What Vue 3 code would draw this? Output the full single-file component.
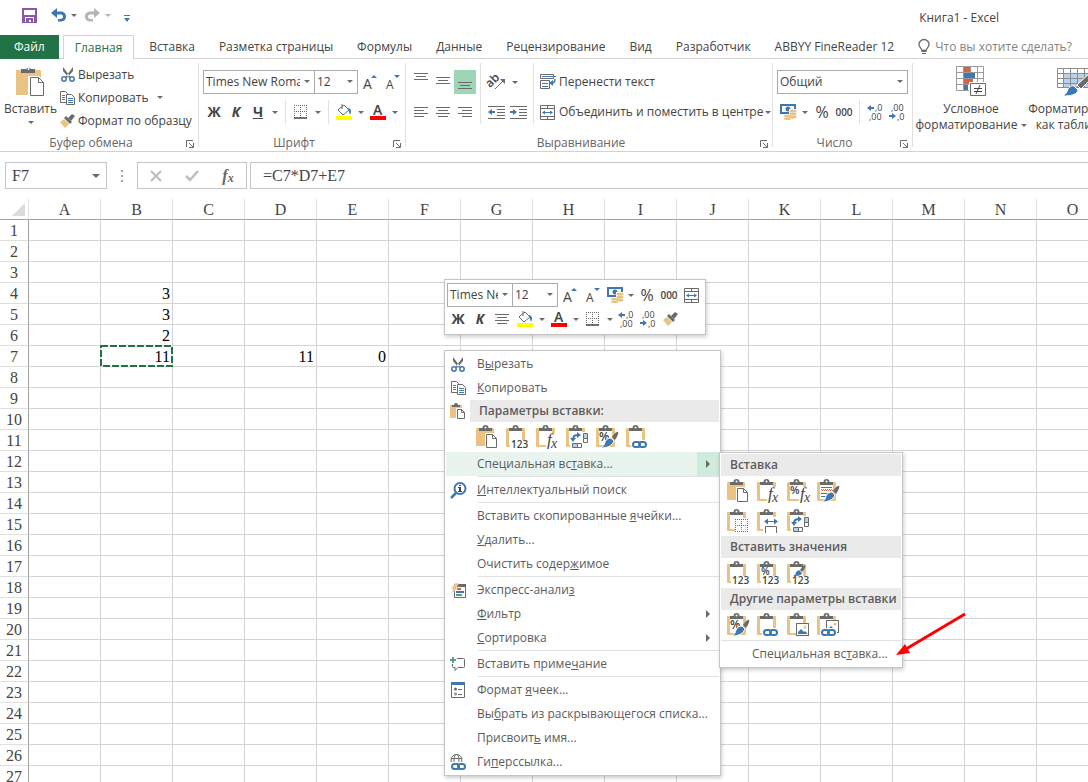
<script setup>
import { h, ref } from 'vue'

const gray = '#6a6a6a'
const blue = '#3f77b3'
const tan = '#eac282'

// list of [x, y, width] turned into one pixel lines
const lines = (list, color = gray) =>
  list.map(([x, y, w]) => `<rect x="${x}" y="${y}" width="${w}" height="1" fill="${color}"/>`).join('')

const label = (x, y, size, text, extra = '') =>
  `<text x="${x}" y="${y}" font-size="${size}" fill="#444" font-family="Open Sans, sans-serif" ${extra}>${text}</text>`

const clip = `<path d="M3 6V3h3.500a3 3 0 0 1 6 0H16v3z" fill="${gray}"/><circle cx="9.500" cy="2.500" r="1" fill="#fff"/>`
const solidBoard = `<rect y="3" width="18" height="18" rx="1" fill="${tan}"/>${clip}`
const openBoard = `<rect y="3" width="19" height="19" rx="1" fill="${tan}"/><path d="M3 6h13v14H3z" fill="#fff"/>${clip}`
const page = `<path d="M9 8h8l5 5v11H9z" fill="#fff"/><path d="M10.500 9.500h6l4 4v9h-10z" fill="#fff" stroke="${gray}"/><path d="M16.500 9.500v4h4" fill="none" stroke="${gray}"/>`
const fx = (x) => `<rect x="${x}" y="8" width="${22 - x}" height="16" fill="#fff"/><text x="${x + 1}" y="20" font-size="17" font-style="italic" font-family="Liberation Serif, serif" fill="#444">f</text><text x="${x + 5}" y="23" font-size="14" font-style="italic" font-family="Liberation Serif, serif" fill="#444">x</text>`
const digits = `<rect x="4" y="15" width="18" height="9" fill="#fff"/>${label(5, 23, 10, '123', 'font-weight="600"')}`
const brush = `<path d="M22 7c-1-1-4 2-6 5l3 3c2-3 4-7 3-8z" fill="${gray}"/><path d="M15 13l3 3c-2 5-7 7-13 7 3-2 3-3 4-6 1-3 4-4 6-4z" fill="${blue}" stroke="#fff"/>`
const chain = (x, y) => `<rect x="${x - 1}" y="${y - 1}" width="17" height="9" fill="#fff"/><g fill="none" stroke="${blue}" stroke-width="2"><rect x="${x + 1}" y="${y + 1}" width="7" height="5" rx="2.500"/><rect x="${x + 7}" y="${y + 1}" width="7" height="5" rx="2.500"/></g>`
const transposeMark = `<rect x="4" y="7" width="18" height="17" fill="#fff"/><path d="M7 14c0-3 2-4 5-4" fill="none" stroke="${blue}" stroke-width="2"/><path d="M11 7l4 3-4 3zM4 13h6l-3 4z" fill="${blue}"/><path d="M17.500 8.500h4v5h-4zM6.500 18.500h5v4h-5z" fill="#b7cfe8" stroke="${gray}"/><path d="M17.500 13.500h4v4h-4zM11.500 18.500h4v4h-4z" fill="#fff" stroke="${gray}"/>`
const picture = (x, y) => `<rect x="${x}.500" y="${y}.500" width="12" height="12" fill="#fff" stroke="${gray}"/><path d="M${x + 2} ${y + 11}v-2l3-3 3 3 1-1 2 2v1z" fill="${blue}"/><circle cx="${x + 9}" cy="${y + 4}" r="1.500" fill="${tan}"/>`
const scissors = `<path d="M2 0l7.500 10-1.500 1L2 4zM12 0L4.500 10 6 11l6-7z" fill="${gray}"/><g fill="#fff" stroke="${blue}" stroke-width="1.500"><circle cx="3" cy="12" r="2.200"/><circle cx="11" cy="12" r="2.200"/></g>`
const copyPages = `<path d="M.5.5h5l2 2v9h-7z" fill="#fff" stroke="${gray}"/>${lines([[2, 4, 3], [2, 6, 3], [2, 8, 3]], blue)}<path d="M6.500 3.500h5l3 3v7h-8z" fill="#fff" stroke="${gray}"/>${lines([[8, 7, 5], [8, 9, 5], [8, 11, 5]], blue)}`
const arrowL = (x, y) => `<path d="M${x} ${y}l4-3v2h3v2h-3v2z" fill="${blue}"/>`
const arrowR = (x, y) => `<path d="M${x} ${y}l-4-3v2h-3v2h3v2z" fill="${blue}"/>`
const undoPath = 'M0 5l6-5v3.500h3c4 0 6 2 6 5s-2 5-6 5H7v-2.500h2c2.500 0 3-1 3-2.500S11 6.500 9 6.500H6v3.500z'

// name: [width, height, markup]
const icons = {
  save: [15, 15, `<path d="M0 0h15v15H0zM2 2v5h11V2zM3 9v4h1v-3h7v3h1V9z" fill="#8a58a8" fill-rule="evenodd"/><path d="M3 9h9v5H3z" fill="#fff"/><path d="M4 10h7v4H9v-2H7v2H4z" fill="#8a58a8"/>`],
  undo: [15, 14, `<path d="${undoPath}" fill="${blue}"/>`],
  redo: [15, 14, `<path transform="matrix(-1 0 0 1 15 0)" d="${undoPath}" fill="#b4b4b4"/>`],
  more: [6, 7, `<path d="M0 0h6v1H0zM0 3h6L3 7z" fill="${blue}"/>`],
  bulb: [12, 16, `<path d="M4 11.500c0-2-3-3-3-6a5 5 0 0 1 10 0c0 3-3 4-3 6z" fill="none" stroke="${gray}" stroke-width="1.300"/><path d="M3.500 12h5v1h-5zM4 14h4v1H4z" fill="${gray}"/>`],
  pasteBig: [29, 31, `<rect y="4" width="25" height="25" rx="1" fill="${tan}"/><path d="M5 7V3h5a3 3 0 0 1 5 0h4v4z" fill="${gray}"/><circle cx="12.500" cy="3" r="1" fill="#fff"/><path d="M12 10h11l6 6v15H12z" fill="#fff"/><path d="M14.500 11.500h8l5 5v13h-13z" fill="#fff" stroke="${gray}"/><path d="M22.500 11.500v5h5" fill="none" stroke="${gray}"/>`],
  cut: [14, 15, scissors],
  copy: [15, 14, copyPages],
  brush: [16, 14, `<path d="M12 0l3 2-4 5-3-3z" fill="${gray}"/><path d="M6 2l6 6-2 2-6-6z" fill="${gray}"/><path d="M4 5l5 5-4 4-5-6z" fill="${tan}"/>`],
  launcher: [8, 8, `<path d="M.5 7V.5H7" fill="none" stroke="${gray}"/><path d="M3 3l4 4M7.500 3v4.500H3" fill="none" stroke="${gray}"/>`],
  grow: [14, 16, `${label(0, 15, 14, 'A')}<path d="M8 4h6l-3-3z" fill="${blue}"/>`],
  shrink: [14, 16, `${label(0, 15, 12, 'A')}<path d="M8 1h6l-3 3z" fill="${blue}"/>`],
  borders: [14, 14, `<path d="M0 .5h13M0 6.500h13M.5 0v13M6.500 0v13M12.500 0v13" stroke="${gray}" stroke-dasharray="1 1"/><path d="M0 13h13" stroke="#444" stroke-width="1.500"/>`],
  fill: [16, 16, `<path d="M3 5l5-4 5 5-6 5-5-5z" fill="#fff" stroke="${gray}"/><path d="M6 0v5" stroke="${gray}"/><path d="M11 4c4 0 5 3 3 7-1-3-1-4-3-7z" fill="${blue}"/><rect y="12" width="16" height="4" fill="#ff0"/>`],
  color: [16, 16, `${label(3, 11, 14, 'A', 'font-weight="600"')}<rect y="12" width="16" height="4" fill="red"/>`],
  alignTop: [14, 18, lines([[0, 0, 14], [2, 3, 10], [0, 6, 14]])],
  alignMiddle: [14, 18, lines([[0, 4, 14], [2, 7, 10], [0, 10, 14]])],
  alignBottom: [14, 18, lines([[0, 9, 14], [2, 12, 10], [0, 15, 14]])],
  alignLeft: [14, 10, lines([[0, 0, 14], [0, 3, 10], [0, 6, 14], [0, 9, 10]])],
  alignCenter: [14, 10, lines([[0, 0, 14], [2, 3, 10], [0, 6, 14], [2, 9, 10]])],
  alignRight: [14, 10, lines([[0, 0, 14], [4, 3, 10], [0, 6, 14], [4, 9, 10]])],
  orient: [17, 16, `<g transform="rotate(-45 6 8)">${label(-2, 9, 12, 'ab', 'font-weight="600"')}</g><path d="M6 15l8-8" stroke="${gray}"/><path d="M11 5h5v5z" fill="${gray}"/>`],
  outdent: [17, 13, lines([[0, 0, 17], [9, 3, 8], [9, 6, 8], [9, 9, 8], [0, 12, 17]]) + arrowL(0, 6)],
  indent: [17, 13, lines([[0, 0, 17], [9, 3, 8], [9, 6, 8], [9, 9, 8], [0, 12, 17]]) + arrowR(7, 6)],
  wrap: [16, 16, `<path d="M.5.500h13v4H.5zM.5 6.500h9v8h-9z" fill="#fff" stroke="${gray}"/>${lines([[2, 2, 14], [2, 9, 6], [2, 12, 6]], blue)}<path d="M15 5c0 3-1 4-3 4" fill="none" stroke="${blue}" stroke-width="1.500"/><path d="M9 9l4-3v6z" fill="${blue}"/>`],
  merge: [15, 15, `<path d="M.5.5h14v14H.5zM.5 3.500h14M.5 11.500h14M7.500 0v3M7.500 12v3" fill="none" stroke="${gray}"/><path d="M3 7.500h9" stroke="${blue}"/><path d="M2 7.500l3-2v4zM13 7.500l-3-2v4z" fill="${blue}"/>`],
  money: [17, 16, `<rect width="16" height="10" fill="${blue}"/><path d="M2 2h12v6H2z" fill="#fff"/><circle cx="8" cy="5" r="2.500" fill="${blue}"/><path d="M9 5h8v11H3v-6h6z" fill="#fff"/><g fill="${tan}"><ellipse cx="13" cy="7" rx="3.500" ry="1.500"/><ellipse cx="13" cy="10" rx="3.500" ry="1.500"/><ellipse cx="13" cy="13" rx="3.500" ry="1.500"/><ellipse cx="7.500" cy="12" rx="3.500" ry="1.300"/><ellipse cx="7.500" cy="14.700" rx="3.500" ry="1.300"/></g>`],
  moreDigits: [16, 16, `${arrowL(0, 4)}${label(8, 7, 9, ',0')}${label(2, 16, 9, ',00')}`],
  lessDigits: [16, 16, `${label(2, 7, 9, ',00')}${arrowR(7, 12)}${label(8, 16, 9, ',0')}`],
  conditional: [30, 31, `<path d="M.5.5h27v24H.5zM0 6.500h28M0 12.500h28M0 18.500h28M7.500 0v25M14.500 0v25M21.500 0v25" fill="none" stroke="#9a9a9a"/><path d="M8 1h6v5H8zM8 13h9v5H8z" fill="#dc6141"/><path d="M8 7h11v5H8zM8 19h4v5H8z" fill="${blue}"/><path d="M13 16h17v15H13z" fill="#fff"/><path d="M14.500 17.500h15v12h-15z" fill="#fff" stroke="${gray}"/><path d="M18 22.500h8M18 25.500h8M24 19l-4 9" stroke="#444"/>`],
  tableFormat: [36, 31, `<g transform="translate(0 2)"><path d="M7 6h28v14H7z" fill="#b9d0ea"/><path d="M.5.5h34v19H.5zM0 5.500h35M0 10.500h35M0 15.500h35M6.500 0v20M13.500 0v20M20.500 0v20M27.500 0v20" fill="none" stroke="#8d8d8d"/><path d="M34 4l-14 13 4 4L36 9z" fill="${gray}" stroke="#fff"/><path d="M17 18l4 4c-1 5-8 6-15 6 3-2 4-4 5-7 1-2 4-4 6-3z" fill="${blue}" stroke="#fff"/></g>`],
  paste: [22, 24, solidBoard + page],
  pasteSmall: [16, 16, `<path d="M0 2h12v13H0z" fill="${tan}"/><path d="M2 4V2h2a2 2 0 0 1 4 0h2v2z" fill="${gray}"/><path d="M6 5h10v11H6z" fill="#fff"/><path d="M7.500 6.500h4l3 3v6h-7z" fill="#fff" stroke="${gray}"/><path d="M11.500 6.500v3h3" fill="none" stroke="${gray}"/>`],
  pasteValues: [22, 24, openBoard + digits],
  pasteFormula: [22, 24, openBoard + fx(10)],
  pasteTranspose: [22, 24, openBoard + transposeMark],
  pasteFormat: [22, 24, openBoard + label(3, 16, 12, '%', 'font-weight="600"') + brush],
  pasteLink: [22, 24, openBoard + chain(6, 16)],
  pasteFormulaNumber: [22, 24, openBoard + fx(12) + label(3, 15, 11, '%', 'font-weight="600"')],
  pasteSource: [22, 24, openBoard + lines([[4, 8, 11], [4, 14, 9], [4, 17, 6]], blue) + `<path d="M4 10.500h11M5 11.500h11" stroke="#dc6141" stroke-dasharray="1 1"/>` + brush],
  pasteNoBorders: [22, 24, openBoard + `<path d="M8 9h14v15H8z" fill="#fff"/><path d="M8 10.500h13M8 16.500h13M8 22.500h13M8.500 10v13M14.500 10v13M20.500 10v13" stroke="${gray}" stroke-dasharray="1 1"/>`],
  pasteWidth: [22, 24, openBoard + `<path d="M6 8h16v16H6z" fill="#fff"/><path d="M8.500 24v-6.500h11V24" fill="none" stroke="${gray}"/><path d="M9 12.500h10" stroke="${blue}"/><path d="M7 12.500l4-3v6zM21 12.500l-4-3v6z" fill="${blue}"/>`],
  pasteValuesNumber: [22, 24, openBoard + digits + label(4, 14, 10, '%', 'font-weight="600"')],
  pasteValuesSource: [22, 24, openBoard + digits + `<path d="M18 4c-1 0-4 3-5 5l2 2c2-2 4-5 3-7z" fill="${gray}"/><path d="M12 9l3 3c-1 3-5 3-9 3 2-1 3-2 3-4z" fill="${blue}"/>`],
  pastePicture: [22, 24, openBoard + picture(9, 10)],
  pastePictureLink: [22, 24, openBoard + picture(9, 7) + chain(4, 16)],
  lookup: [17, 17, `<circle cx="10" cy="6.500" r="5.500" fill="#fff" stroke="${blue}" stroke-width="2"/><path d="M6 11l-5 5" stroke="${blue}" stroke-width="2.500"/><path d="M9 3h2v1H9zM8 5h3v4h1v1H8V9h1V6H8z" fill="#444"/>`],
  analysis: [15, 15, `<path d="M3.500 1.500h11v13h-11z" fill="#fff" stroke="${gray}"/><path d="M3 1h12v3H3z" fill="${gray}"/><path d="M6 5h4v2H6z" fill="#dc6141"/><path d="M5 8h8v2H5z" fill="${blue}"/><path d="M5 11h6v2H5z" fill="#55a07d"/><path d="M4 0h4L5 4h3L0 11l2-5H0z" fill="${tan}" stroke="#fff" stroke-width=".5"/>`],
  comment: [16, 15, `<path d="M7 1.500h6.500a1 1 0 0 1 1 1v7a1 1 0 0 1-1 1H8l-3 3v-3H3.500a1 1 0 0 1-1-1V7" fill="none" stroke="${gray}"/><path d="M2 0h2v2h2v2H4v2H2V4H0V2h2z" fill="#55a07d"/>`],
  cells: [14, 16, `<path d="M.5.5h13v15H.5z" fill="#fff" stroke="${gray}"/><path d="M0 0h14v3H0z" fill="${blue}"/><circle cx="4.500" cy="7" r="1.500" fill="${gray}"/><circle cx="4.500" cy="12" r="1" fill="#fff" stroke="${gray}"/>${lines([[7, 7, 4], [7, 12, 4]])}`],
  link: [16, 16, `<g fill="none" stroke="${gray}"><circle cx="6.500" cy="6" r="5.500"/><ellipse cx="6.500" cy="6" rx="2.500" ry="5.500"/><path d="M1 4.500h11M1 8.500h11"/></g>${chain(1, 9)}`],
  cancel: [12, 12, '<path d="M1 1l10 10M11 1L1 11" stroke="#bdbdbd" stroke-width="2"/>'],
  accept: [14, 11, '<path d="M1 6l4 4 8-9" fill="none" stroke="#bdbdbd" stroke-width="2.500"/>'],
}

const Icon = ({ name }) => {
  const [width, height, innerHTML] = icons[name]
  return h('svg', { width, height, viewBox: `0 0 ${width} ${height}`, overflow: 'visible', 'aria-hidden': true, innerHTML })
}
Icon.props = ['name']

const tabs = ['Вставка', 'Разметка страницы', 'Формулы', 'Данные', 'Рецензирование', 'Вид', 'Разработчик', 'ABBYY FineReader 12']
const columns = 'ABCDEFGHIJKLMNO'.split('')
const cells = { B4: 3, B5: 3, B6: 2, B7: 11, D7: 11, E7: 0 }
const formula = ref('=C7*D7+E7')

const pasteOptions = ['paste', 'pasteValues', 'pasteFormula', 'pasteTranspose', 'pasteFormat', 'pasteLink']

// & stands before the underlined access key
const menu = [
  [{ text: 'В&ырезать', icon: 'cut' }, { text: '&Копировать', icon: 'copy' }, { options: true }, { text: 'Специальная вс&тавка...', sub: true, active: true }],
  [{ text: '&Интеллектуальный поиск', icon: 'lookup' }],
  [{ text: 'Вставить скопированные &ячейки...' }, { text: '&Удалить...' }, { text: 'Очистить содер&жимое' }],
  [{ text: 'Экспресс-анали&з', icon: 'analysis' }, { text: '&Фильтр', sub: true }, { text: '&Сортировка', sub: true }],
  [{ text: 'Вставить приме&чание', icon: 'comment' }],
  [{ text: 'Формат &ячеек...', icon: 'cells' }, { text: 'Вы&брать из раскрывающегося списка...' }, { text: 'Присвоит&ь имя...' }, { text: 'Ги&перссылка...', icon: 'link' }],
]

const submenu = [
  { title: 'Вставка', icons: ['paste', 'pasteFormula', 'pasteFormulaNumber', 'pasteSource', 'pasteNoBorders', 'pasteWidth', 'pasteTranspose'] },
  { title: 'Вставить значения', icons: ['pasteValues', 'pasteValuesNumber', 'pasteValuesSource'] },
  { title: 'Другие параметры вставки', icons: ['pasteFormat', 'pasteLink', 'pastePicture', 'pastePictureLink'] },
]

const Mnemonic = ({ text }) => {
  const [before, after] = text.split('&')
  return h('span', [before, h('u', after[0]), after.slice(1)])
}
Mnemonic.props = ['text']
</script>

<template>
  <div class="app">
    <header class="title-bar">
      <button class="quick save"><Icon name="save" /></button>
      <button class="quick"><Icon name="undo" /><i class="caret"></i></button>
      <button class="quick faded"><Icon name="redo" /><i class="caret"></i></button>
      <button class="quick"><Icon name="more" /></button>
      <span class="title">Книга1 - Excel</span>
    </header>

    <nav class="tabs">
      <button class="tab file">Файл</button>
      <button class="tab current">Главная</button>
      <button v-for="tab in tabs" :key="tab" class="tab">{{ tab }}</button>
      <label class="ask">
        <Icon name="bulb" />
        <input type="text" placeholder="Что вы хотите сделать?" aria-label="Что вы хотите сделать?">
      </label>
    </nav>

    <section class="ribbon">
      <div class="group clipboard">
        <div class="body">
          <button class="big">
            <Icon name="pasteBig" />
            <span>Вставить</span>
            <i class="caret"></i>
          </button>
          <div class="stack">
            <button class="command"><span class="slot"><Icon name="cut" /></span>Вырезать</button>
            <button class="command"><span class="slot"><Icon name="copy" /></span>Копировать<i class="caret"></i></button>
            <button class="command"><span class="slot"><Icon name="brush" /></span>Формат по образцу</button>
          </div>
        </div>
        <div class="caption">Буфер обмена<Icon name="launcher" /></div>
      </div>

      <div class="group font">
        <div class="body rows">
          <div class="row">
            <label class="combo family"><select aria-label="Шрифт"><option>Times New Roman</option></select></label>
            <label class="combo size"><select aria-label="Размер шрифта"><option>12</option></select></label>
            <button class="tool wide"><Icon name="grow" /></button>
            <button class="tool"><Icon name="shrink" /></button>
          </div>
          <div class="row">
            <button class="tool bold">Ж</button>
            <button class="tool bold italic">К</button>
            <button class="tool bold"><u>Ч</u></button>
            <button class="drop"><i class="caret"></i></button>
            <i class="divider"></i>
            <button class="tool"><Icon name="borders" /></button>
            <button class="drop"><i class="caret"></i></button>
            <i class="divider"></i>
            <button class="tool"><Icon name="fill" /></button>
            <button class="drop"><i class="caret"></i></button>
            <button class="tool"><Icon name="color" /></button>
            <button class="drop"><i class="caret"></i></button>
          </div>
        </div>
        <div class="caption">Шрифт<Icon name="launcher" /></div>
      </div>

      <div class="group align">
        <div class="body">
          <div class="rows">
            <div class="row">
              <button class="tool"><Icon name="alignTop" /></button>
              <button class="tool"><Icon name="alignMiddle" /></button>
              <button class="tool pressed"><Icon name="alignBottom" /></button>
            </div>
            <div class="row">
              <button class="tool"><Icon name="alignLeft" /></button>
              <button class="tool"><Icon name="alignCenter" /></button>
              <button class="tool"><Icon name="alignRight" /></button>
            </div>
          </div>
          <i class="divider tall"></i>
          <div class="rows">
            <div class="row">
              <button class="tool wide"><Icon name="orient" /></button>
              <button class="drop"><i class="caret"></i></button>
            </div>
            <div class="row">
              <button class="tool"><Icon name="outdent" /></button>
              <button class="tool"><Icon name="indent" /></button>
            </div>
          </div>
          <i class="divider tall"></i>
          <div class="rows">
            <button class="command"><span class="slot"><Icon name="wrap" /></span>Перенести текст</button>
            <button class="command"><span class="slot"><Icon name="merge" /></span>Объединить и поместить в центре<i class="caret"></i></button>
          </div>
        </div>
        <div class="caption">Выравнивание<Icon name="launcher" /></div>
      </div>

      <div class="group number">
        <div class="body rows">
          <div class="row">
            <label class="combo format"><select aria-label="Числовой формат"><option>Общий</option></select></label>
          </div>
          <div class="row">
            <button class="tool"><Icon name="money" /></button>
            <button class="drop"><i class="caret"></i></button>
            <button class="tool percent">%</button>
            <button class="tool zeros">000</button>
            <i class="divider"></i>
            <button class="tool"><Icon name="moreDigits" /></button>
            <button class="tool"><Icon name="lessDigits" /></button>
          </div>
        </div>
        <div class="caption">Число<Icon name="launcher" /></div>
      </div>

      <div class="group styles">
        <div class="body">
          <button class="big">
            <Icon name="conditional" />
            <span>Условное<br>форматирование<i class="caret"></i></span>
          </button>
          <button class="big">
            <Icon name="tableFormat" />
            <span>Форматировать<br>как таблицу<i class="caret"></i></span>
          </button>
        </div>
      </div>
    </section>

    <section class="formula-bar">
      <label class="name-box"><input type="text" value="F7" aria-label="Имя"><i class="caret large"></i></label>
      <span class="dots"><i></i><i></i><i></i></span>
      <div class="formula-tools">
        <button><Icon name="cancel" /></button>
        <button><Icon name="accept" /></button>
        <button class="fx">f<small>x</small></button>
      </div>
      <input v-model="formula" class="formula" type="text" aria-label="Строка формул">
    </section>

    <main class="sheet">
      <table>
        <thead>
          <tr>
            <th class="corner"></th>
            <th v-for="col in columns" :key="col">{{ col }}</th>
          </tr>
        </thead>
        <tbody>
          <tr v-for="row in 27" :key="row">
            <th>{{ row }}</th>
            <td v-for="col in columns" :key="col">
              {{ cells[col + row] }}
              <svg v-if="col + row === 'B7'" class="ants" width="73" height="22"><rect x="1" y="1" width="71" height="20" /></svg>
            </td>
          </tr>
        </tbody>
      </table>
    </main>

    <div class="popup mini">
      <div class="row">
        <label class="combo family"><select aria-label="Шрифт"><option>Times New Roman</option></select></label>
        <label class="combo size"><select aria-label="Размер шрифта"><option>12</option></select></label>
        <button class="tool wide"><Icon name="grow" /></button>
        <button class="tool"><Icon name="shrink" /></button>
        <button class="tool"><Icon name="money" /></button>
        <button class="drop"><i class="caret"></i></button>
        <button class="tool percent">%</button>
        <button class="tool zeros">000</button>
        <button class="tool"><Icon name="merge" /></button>
      </div>
      <div class="row">
        <button class="tool bold">Ж</button>
        <button class="tool bold italic">К</button>
        <button class="tool"><Icon name="alignCenter" /></button>
        <button class="tool wide"><Icon name="fill" /></button>
        <button class="drop"><i class="caret"></i></button>
        <button class="tool wide"><Icon name="color" /></button>
        <button class="drop"><i class="caret"></i></button>
        <button class="tool wide"><Icon name="borders" /></button>
        <button class="drop"><i class="caret"></i></button>
        <button class="tool"><Icon name="moreDigits" /></button>
        <button class="tool"><Icon name="lessDigits" /></button>
        <button class="tool wide"><Icon name="brush" /></button>
      </div>
    </div>

    <div class="popup menu">
      <div v-for="(section, i) in menu" :key="i" class="section">
        <template v-for="item in section" :key="item.text">
          <template v-if="item.options">
            <div class="heading-row">
              <span class="menu-icon"><Icon name="pasteSmall" /></span>
              <h3 class="heading">Параметры вставки:</h3>
            </div>
            <div class="paste-row">
              <button v-for="name in pasteOptions" :key="name"><Icon :name="name" /></button>
            </div>
          </template>
          <button v-else class="menu-item" :class="{ active: item.active }">
            <span class="menu-icon"><Icon v-if="item.icon" :name="item.icon" /></span>
            <Mnemonic :text="item.text" />
            <span v-if="item.sub" class="sub-arrow"></span>
          </button>
        </template>
      </div>
    </div>

    <div class="popup submenu">
      <template v-for="part in submenu" :key="part.title">
        <h3 class="heading">{{ part.title }}</h3>
        <div class="paste-row">
          <button v-for="name in part.icons" :key="name"><Icon :name="name" /></button>
        </div>
      </template>
      <button class="menu-item last"><Mnemonic text="Специальная вс&тавка..." /></button>
    </div>

    <svg class="pointer" width="70" height="46" aria-hidden="true">
      <path d="M69 2L10 37" stroke="#f00" stroke-width="3" />
      <path d="M0 43l9-11 5 9z" fill="#f00" />
    </svg>
  </div>
</template>

<style>
body {
  margin: 0;
  overflow: hidden;
}
</style>

<style scoped>
* {
  box-sizing: border-box;
}
.app {
  position: relative;
  display: flex;
  flex-direction: column;
  height: 100vh;
  overflow: hidden;
  background: #fff;
  color: #444;
  font: 12px/16px "Open Sans", "Noto Sans", sans-serif;
}
button, input, select {
  margin: 0;
  padding: 0;
  border: none;
  background: transparent;
  color: inherit;
  font: inherit;
  outline: none;
}
button {
  display: flex;
  align-items: center;
  justify-content: center;
  white-space: nowrap;
}
svg {
  display: block;
  flex: none;
}
.caret {
  flex: none;
  display: inline-block;
  border: 3px solid transparent;
  border-top-color: #6a6a6a;
  border-bottom: none;
}
.caret.large {
  border-width: 4px;
  border-bottom: none;
}

.title-bar {
  display: flex;
  align-items: center;
  height: 35px;
  flex: none;
  padding: 0 89px 5px 22px;
}
.quick {
  gap: 5px;
  margin-right: 8px;
}
.quick.save {
  margin-right: 14px;
}
.quick:nth-child(4) {
  padding: 6px 0 0 5px;
}
.faded .caret {
  opacity: 0.5;
}
.title {
  margin-left: auto;
  padding-top: 5px;
}

.tabs {
  display: flex;
  flex: none;
  height: 24px;
  border-bottom: 1px solid #d2d2d2;
}
.tab {
  flex: none;
  padding: 0 12px;
}
.tab.file {
  padding: 0 14px;
  background: #217346;
  color: #fff;
  height: 24px;
}
.tab.current {
  height: 24px;
  margin: 0 3px 0 4px;
  padding: 0 11px;
  border: 1px solid #d2d2d2;
  border-bottom: none;
  background: #fff;
  color: #217346;
}
.ask {
  display: flex;
  align-items: center;
  flex: 1;
  gap: 5px;
  margin-left: 12px;
}
.ask input {
  flex: 1;
  min-width: 0;
}
.ask input::placeholder {
  color: #828282;
}

.ribbon {
  display: flex;
  flex: none;
  padding: 4px 0;
  border-bottom: 1px solid #d2d2d2;
  overflow: hidden;
}
.group {
  display: flex;
  flex-direction: column;
  flex: none;
  height: 84px;
  padding: 0 4px;
  border-right: 1px solid #e1e1e1;
}
.group.clipboard {
  width: 199px;
}
.group.font {
  width: 207px;
}
.group.align {
  width: 367px;
}
.group.number {
  width: 140px;
}
.group.styles {
  border: none;
}
.body {
  display: flex;
  flex: none;
  height: 68px;
}
.caption {
  display: flex;
  align-items: center;
  justify-content: center;
  flex: none;
  position: relative;
  height: 24px;
  padding-right: 16px;
  color: #666;
}
.caption svg {
  position: absolute;
  right: 0;
  top: 9px;
}
.rows {
  display: flex;
  flex-direction: column;
  gap: 6px;
  padding-top: 7px;
}
.row {
  display: flex;
  align-items: center;
  height: 24px;
}
.big {
  flex-direction: column;
  justify-content: flex-start;
  line-height: 16px;
  padding-top: 3px;
  gap: 4px;
}
.clipboard .big {
  width: 53px;
}
.stack {
  margin-left: 1px;
}
.command {
  height: 23px;
  justify-content: flex-start;
}
.rows .command {
  height: 24px;
}
.slot {
  display: flex;
  justify-content: center;
  width: 19px;
  margin-right: 1px;
}
.rows .slot {
  margin: 0 2px 0 0;
}
.command .caret {
  margin-left: 9px;
}
.rows .command .caret {
  margin-left: 2px;
}
.tool {
  flex: none;
  width: 22px;
  height: 24px;
}
.tool.wide {
  width: 24px;
}
.tool.pressed {
  background: #9fd5b7;
}
.bold {
  font-size: 14px;
  font-weight: 700;
}
.italic {
  font-style: italic;
}
.percent {
  font-size: 16px;
}
.zeros {
  font-size: 10px;
  font-weight: 600;
}
.drop {
  flex: none;
  width: 12px;
  height: 24px;
}
.divider {
  flex: none;
  width: 1px;
  height: 24px;
  margin: 0 4px;
  background: #e1e1e1;
}
.divider.tall {
  height: 61px;
}
.combo {
  position: relative;
  flex: none;
  height: 24px;
  border: 1px solid #ababab;
  background: #fff;
}
.combo::after {
  content: "";
  position: absolute;
  right: 4px;
  top: 9px;
  border: 3px solid transparent;
  border-top-color: #6a6a6a;
  border-bottom: none;
}
.combo select {
  appearance: none;
  width: 100%;
  height: 22px;
  padding: 0 14px 0 2px;
}
.family {
  width: 112px;
}
.size {
  width: 44px;
  margin-left: -1px;
}
.format {
  width: 131px;
}
.styles .big {
  width: 108px;
}
.styles .big + .big {
  width: 100px;
}
.styles .big .caret {
  margin: 0 0 2px 3px;
}

.formula-bar {
  display: flex;
  flex: none;
  height: 47px;
  padding: 10px 0 10px 5px;
  font: 16px/24px "Liberation Serif", serif;
}
.name-box {
  display: flex;
  align-items: center;
  width: 102px;
  border: 1px solid #c6c6c6;
  padding: 0 6px;
}
.name-box input {
  flex: 1;
  min-width: 0;
}
.dots {
  display: flex;
  flex-direction: column;
  align-items: center;
  justify-content: center;
  gap: 3px;
  width: 30px;
}
.dots i {
  width: 2px;
  height: 2px;
  background: #a0a0a0;
}
.formula-tools {
  display: flex;
  width: 110px;
  border: 1px solid #c6c6c6;
}
.formula-tools button {
  flex: 1;
}
.fx {
  font-style: italic;
  font-weight: 700;
  color: #666;
}
.fx small {
  font-size: 12px;
  padding-top: 4px;
}
.formula {
  flex: 1;
  margin-left: 3px;
  padding-left: 12px;
  border: 1px solid #c6c6c6;
  border-right: none;
}

.sheet {
  flex: 1;
  min-height: 0;
  overflow: hidden;
}
table {
  table-layout: fixed;
  width: 1109px;
  border-collapse: separate;
  border-spacing: 0;
  font: 16px/18px "Liberation Serif", serif;
}
th, td {
  position: relative;
  height: 21px;
  padding: 2px 0 0;
  border-right: 1px solid #d4d4d4;
  border-bottom: 1px solid #d4d4d4;
}
th {
  border-color: #dfdfdf;
  font-weight: 400;
}
thead th {
  border-bottom-color: #a0a0a0;
}
tbody th {
  border-right-color: #a0a0a0;
}
.corner {
  width: 29px;
}
.corner::after {
  content: "";
  position: absolute;
  right: 3px;
  bottom: 3px;
  border-left: 13px solid transparent;
  border-bottom: 13px solid #dcdcdc;
}
td {
  padding-right: 2px;
  color: #000;
  text-align: right;
}
.ants {
  position: absolute;
  left: -1px;
  top: -1px;
  fill: none;
  stroke: #217346;
  stroke-width: 2;
  stroke-dasharray: 7 2;
}

.popup {
  position: absolute;
  border: 1px solid #c6c6c6;
  background: #fff;
  box-shadow: 1px 2px 4px rgba(0, 0, 0, 0.2);
}
.mini {
  left: 444px;
  top: 279px;
  width: 262px;
  padding: 3px 2px;
}
.mini .family {
  width: 66px;
}
.mini .size {
  width: 46px;
}
.mini .drop {
  width: 10px;
}
.menu {
  left: 444px;
  top: 350px;
  width: 277px;
  padding: 1px;
  color: #5c5c5c;
}
.section + .section::before {
  content: "";
  display: block;
  height: 1px;
  margin: 0 0 1px 32px;
  background: #dfe1e4;
}
.menu-item {
  width: 100%;
  height: 24px;
  justify-content: flex-start;
}
.menu-item.active {
  background: #e9f4ee;
}
.menu-icon {
  display: flex;
  justify-content: center;
  flex: none;
  width: 24px;
}
.menu-item .menu-icon {
  margin-right: 7px;
}
.sub-arrow {
  display: flex;
  align-items: center;
  justify-content: center;
  width: 22px;
  height: 24px;
  margin-left: auto;
}
.active .sub-arrow {
  background: #cfebdc;
}
.sub-arrow::after {
  content: "";
  border: 4px solid transparent;
  border-left-color: #6a6a6a;
  border-right: none;
}
.heading-row {
  display: flex;
  align-items: center;
}
.heading {
  flex: 1;
  height: 22px;
  margin: 0;
  padding-left: 9px;
  background: #eaeaea;
  color: #5c5c5c;
  font-size: 12px;
  font-weight: 600;
  line-height: 22px;
  white-space: nowrap;
}
.paste-row {
  display: flex;
  flex-wrap: wrap;
  padding-left: 26px;
}
.paste-row button {
  width: 30px;
  height: 30px;
}
.submenu {
  left: 719px;
  top: 452px;
  width: 184px;
  padding: 1px;
  color: #5c5c5c;
}
.submenu .paste-row {
  padding: 0 56px 0 2px;
}
.menu-item.last {
  height: 26px;
  padding-left: 31px;
  border-top: 1px solid #dfe1e4;
}
.pointer {
  position: absolute;
  left: 896px;
  top: 612px;
}
</style>
